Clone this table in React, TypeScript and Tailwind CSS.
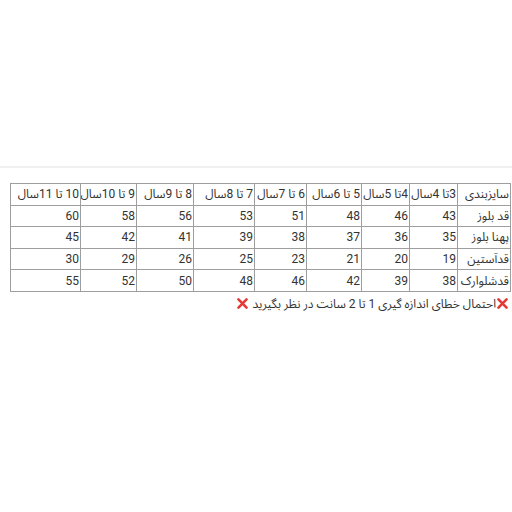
import React from "react";

const widths = [53, 48, 48, 55, 52, 61, 57, 56, 70];
const header = ["سایزبندی", "3تا 4سال", "4تا 5سال", "5 تا 6سال", "6 تا 7سال", "7 تا 8سال", "8 تا 9سال", "9 تا 10سال", "10 تا 11سال"];
const rows = [
  ["قد بلوز", "43", "46", "48", "51", "53", "56", "58", "60"],
  ["پهنا بلوز", "35", "36", "37", "38", "39", "41", "42", "45"],
  ["قدآستین", "19", "20", "21", "23", "25", "26", "29", "30"],
  ["قدشلوارک", "38", "39", "42", "46", "48", "50", "52", "55"],
];

function Cross() {
  return (
    <svg width="13" height="13" viewBox="0 0 16 16" className="inline-block align-[-2px]">
      <path d="M3 3 L13 13 M13 3 L3 13" stroke="#e53935" strokeWidth="3.2" strokeLinecap="round" />
    </svg>
  );
}

export default function App() {
  return (
    <div
      className="w-[512px] h-[512px] bg-white overflow-hidden"
      style={{ fontFamily: "Roboto, 'Noto Sans Arabic UI', 'Noto Sans Arabic', 'Noto Naskh Arabic', 'DejaVu Sans', sans-serif" }}
    >
      <div className="h-[166px]" />
      <div className="h-[2px] bg-[#f0f0f0]" />
      <div className="h-[15px]" />
      <div dir="rtl" className="pr-[1px]">
        <table className="table-fixed w-[500px] border-collapse text-[12px] text-[#333] leading-none">
          <colgroup>
            {widths.map((w, i) => (
              <col key={i} style={{ width: w }} />
            ))}
          </colgroup>
          <tbody>
            <tr className="h-[21.6px]">
              {header.map((h, i) => (
                <td key={i} className="border border-[#9e9e9e] text-right px-[1px] whitespace-nowrap overflow-hidden">
                  {h}
                </td>
              ))}
            </tr>
            {rows.map((r, ri) => (
              <tr key={ri} className="h-[21.6px]">
                {r.map((c, i) => (
                  <td key={i} className="border border-[#9e9e9e] text-right px-[1px] whitespace-nowrap overflow-hidden">
                    {c}
                  </td>
                ))}
              </tr>
            ))}
          </tbody>
        </table>
        <div className="mt-[3px] pr-[2px] text-[12px] text-[#333] whitespace-nowrap">
          <Cross />احتمال خطای اندازه گیری 1 تا 2 سانت در نظر بگیرید <Cross />
        </div>
      </div>
    </div>
  );
}
